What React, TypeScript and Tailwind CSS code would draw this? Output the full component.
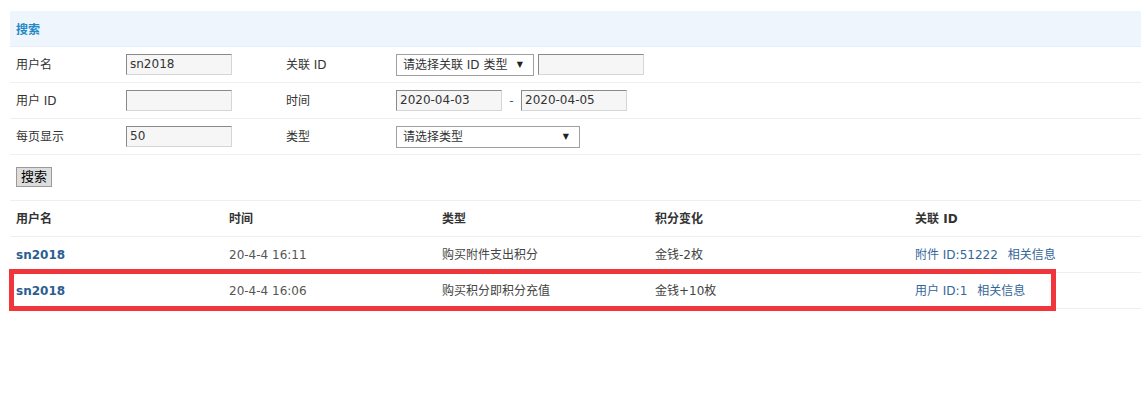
import React from 'react'

const font = { fontFamily: '"DejaVu Sans", "Noto Sans CJK SC", sans-serif' }

function TextInput({ value = '', w = 'w-[106px]' }: { value?: string; w?: string }) {
  return (
    <div
      className={`${w} h-[21px] bg-[#f6f6f6] border border-t-[#8a8a8a] border-l-[#8a8a8a] border-r-[#d6d6d6] border-b-[#d6d6d6] px-[3px] text-[12px] leading-[19px] text-[#333]`}
    >
      {value}
    </div>
  )
}

function Select({ label, w }: { label: string; w: string }) {
  return (
    <div
      className={`${w} h-[22px] bg-white border border-[#a0a0a0] flex items-center justify-between pl-[6px] pr-[10px] text-[12px] text-[#333]`}
    >
      <span>{label}</span>
      <span className="text-[8px] text-[#222]">▼</span>
    </div>
  )
}

function FormRow({ label, input, label2, control }: { label: string; input: React.ReactNode; label2: string; control: React.ReactNode }) {
  return (
    <div className="flex items-center h-[36px] border-b border-[#efefef]">
      <div className="w-[116px] pl-[6px] text-[12px] text-[#333]">{label}</div>
      <div className="w-[160px]">{input}</div>
      <div className="w-[110px] text-[12px] text-[#333]">{label2}</div>
      <div className="flex items-center">{control}</div>
    </div>
  )
}

const rows = [
  { user: 'sn2018', time: '20-4-4 16:11', type: '购买附件支出积分', change: '金钱-2枚', rel: '附件 ID:51222' },
  { user: 'sn2018', time: '20-4-4 16:06', type: '购买积分即积分充值', change: '金钱+10枚', rel: '用户 ID:1' },
]

export default function App() {
  return (
    <div className="relative w-[1141px] h-[404px] bg-white pt-[11px] pl-[10px]" style={font}>
      <div className="h-[36px] bg-[#eef5fd] border-b border-[#e6eef8] flex items-center pl-[6px] pt-[2px] text-[12px] font-bold text-[#2489c5]">
        搜索
      </div>

      <FormRow
        label="用户名"
        input={<TextInput value="sn2018" />}
        label2="关联 ID"
        control={
          <div className="flex items-center gap-[4px]">
            <Select label="请选择关联 ID 类型" w="w-[138px]" />
            <TextInput />
          </div>
        }
      />
      <FormRow
        label="用户 ID"
        input={<TextInput />}
        label2="时间"
        control={
          <div className="flex items-center">
            <TextInput value="2020-04-03" />
            <span className="w-[19px] text-center text-[12px] text-[#555]">-</span>
            <TextInput value="2020-04-05" />
          </div>
        }
      />
      <FormRow
        label="每页显示"
        input={<TextInput value="50" />}
        label2="类型"
        control={<Select label="请选择类型" w="w-[184px]" />}
      />

      <div className="h-[46px] border-b border-[#efefef] pl-[6px] pt-[9px]">
        <button className="w-[36px] h-[20px] bg-[#dddddd] border border-[#9a9a9a] text-[13px] leading-[18px] text-black">
          搜索
        </button>
      </div>

      <div className="flex items-center h-[36px] border-b border-[#efefef] text-[12px] font-bold text-[#333]">
        <div className="w-[213px] pl-[6px]">用户名</div>
        <div className="w-[213px] pl-[6px]">时间</div>
        <div className="w-[213px] pl-[6px]">类型</div>
        <div className="w-[260px] pl-[6px]">积分变化</div>
        <div className="pl-[6px]">关联 ID</div>
      </div>

      {rows.map((r, i) => (
        <div key={i} className="flex items-center h-[36px] border-b border-[#efefef] text-[12px] text-[#444]">
          <div className="w-[213px] pl-[6px] font-bold text-[#2b5d91]">{r.user}</div>
          <div className="w-[213px] pl-[6px] text-[#555]">{r.time}</div>
          <div className="w-[213px] pl-[6px]">{r.type}</div>
          <div className="w-[260px] pl-[6px]">{r.change}</div>
          <div className="pl-[6px] text-[#336699] flex gap-[10px]">
            <span>{r.rel}</span>
            <span>相关信息</span>
          </div>
        </div>
      ))}

      <div className="absolute left-[9px] top-[269px] w-[1047px] h-[42px] border-[5px] border-[#f0353b] pointer-events-none" />
    </div>
  )
}
